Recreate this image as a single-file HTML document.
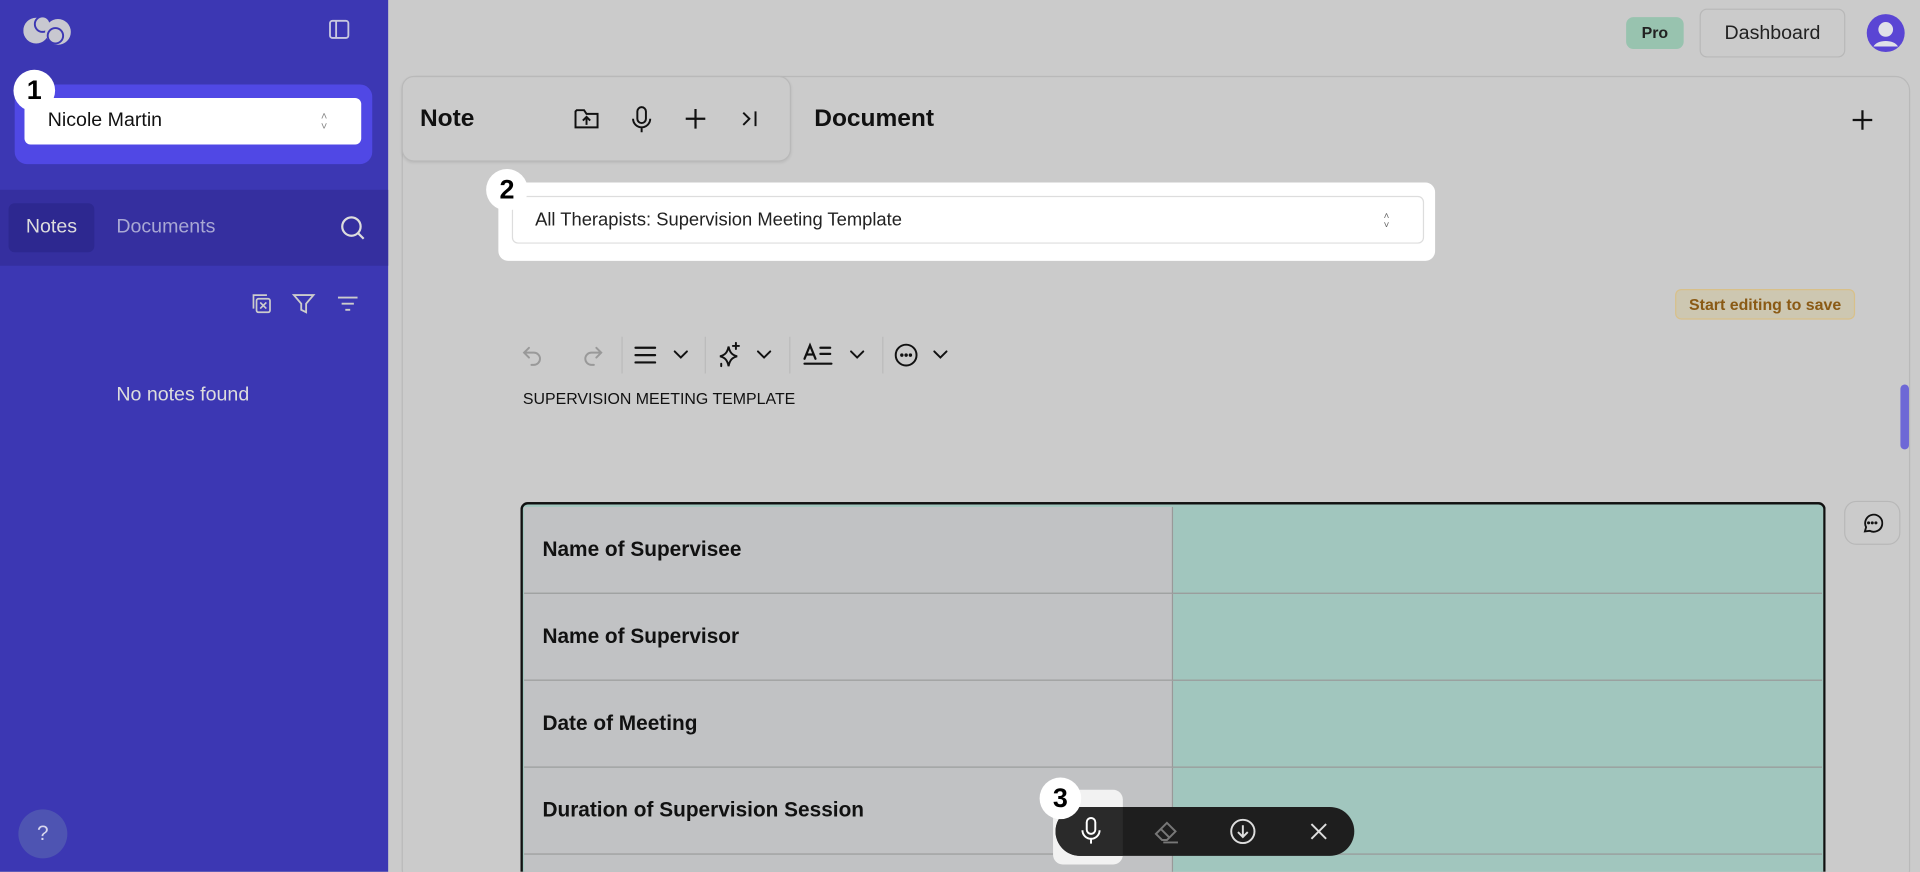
<!DOCTYPE html>
<html><head><meta charset="utf-8"><style>
*{box-sizing:border-box;margin:0;padding:0}
html,body{width:1920px;height:872px;overflow:hidden;background:#cbcbcb}
#w{width:1568px;height:712px;transform:scale(1.22449);transform-origin:0 0;position:relative;font-family:"Liberation Sans",sans-serif;color:#111;overflow:hidden}
.a{position:absolute}
svg{display:block}
.badge{position:absolute;width:34px;height:34px;border-radius:50%;background:#fff;font-weight:bold;font-size:22px;text-align:center;line-height:34px;color:#000}
td{padding:0}
</style></head><body><div id="w">
<div class="a" style="left:0;top:0;width:317px;height:712px;background:#3c37b3"></div>
<svg class="a" style="left:19px;top:11px" width="42" height="28" viewBox="0 0 40 26"><circle cx="10" cy="13" r="10" fill="#c8c8d0"/><circle cx="15" cy="8" r="6" fill="#c8c8d0" stroke="#3c37b3" stroke-width="1.5"/><circle cx="27" cy="14" r="10" fill="#c8c8d0"/><circle cx="25" cy="17" r="6" fill="#c8c8d0" stroke="#3c37b3" stroke-width="1.5"/></svg>
<svg class="a" style="left:268px;top:15px" width="18" height="18" viewBox="0 0 18 18" fill="none" stroke="#c8c8e0" stroke-width="1.5"><rect x="1.5" y="2" width="15" height="14" rx="2"/><line x1="6.5" y1="2" x2="6.5" y2="16"/></svg>
<div class="a" style="left:12px;top:69px;width:292px;height:65px;border-radius:10px;background:#5048e5"></div>
<div class="a" style="left:20px;top:80px;width:275px;height:38px;border-radius:5px;background:#fff;font-size:16px;line-height:38px;padding-left:19px;color:#111">Nicole Martin</div>
<div class="a" style="left:262px;top:91px;font-size:9px;color:#888;line-height:8px">˄<br>˅</div>
<div class="badge" style="left:11px;top:57px">1</div>
<div class="a" style="left:0;top:155px;width:317px;height:62px;background:#352f9f"></div>
<div class="a" style="left:7px;top:166px;width:70px;height:40px;border-radius:5px;background:#2d2890;color:#ddd;font-size:16px;line-height:40px;text-align:center">Notes</div>
<div class="a" style="left:95px;top:177px;color:#a9a8d4;font-size:16px">Documents</div>
<svg class="a" style="left:277px;top:175px" width="22" height="22" viewBox="0 0 22 22" fill="none" stroke="#ddd" stroke-width="1.8"><circle cx="10" cy="10" r="7.5"/><line x1="15.5" y1="15.5" x2="20" y2="20"/></svg>
<svg class="a" style="left:203px;top:238px" width="20" height="20" viewBox="0 0 20 20" fill="none" stroke="#ccc" stroke-width="1.4"><path d="M4 14V3h11"/><rect x="6.5" y="6" width="11" height="11" rx="1.5"/><path d="M9.5 9l5 5M14.5 9l-5 5"/></svg>
<svg class="a" style="left:238px;top:238px" width="20" height="20" viewBox="0 0 20 20" fill="none" stroke="#ccc" stroke-width="1.5"><path d="M2 3h16l-6 7v7l-4-2v-5z"/></svg>
<svg class="a" style="left:274px;top:238px" width="20" height="20" viewBox="0 0 20 20" fill="none" stroke="#ccc" stroke-width="1.5"><path d="M2 5h16M5 10h10M8 15h4"/></svg>
<div class="a" style="left:95px;top:314px;color:#ddd;font-size:16px">No notes found</div>
<div class="a" style="left:15px;top:661px;width:40px;height:40px;border-radius:50%;background:#4e54b2;font-size:17px;text-align:center;line-height:40px;color:#d8d8ee">?</div>

<div class="a" style="left:1328px;top:14px;width:47px;height:26px;border-radius:6px;background:#98c3af;font-size:13px;line-height:26px;text-align:center;color:#222;font-weight:bold">Pro</div>
<div class="a" style="left:1388px;top:7px;width:119px;height:40px;border-radius:6px;border:1px solid #b8b8b8;background:#cbcbcb;font-size:16px;line-height:40px;text-align:center;color:#222">Dashboard</div>
<svg class="a" style="left:1524px;top:11px" width="32" height="32" viewBox="0 0 32 32"><circle cx="16" cy="16" r="15.5" fill="#5a45d4"/><circle cx="16" cy="13" r="6" fill="#e0e0e8"/><path d="M6 27c3-6 17-6 20 0" fill="#e0e0e8"/></svg>

<div class="a" style="left:328px;top:62px;width:1232px;height:660px;border:1px solid #b9b9b9;border-radius:12px"></div>
<div class="a" style="left:328px;top:62px;width:318px;height:70px;border:1px solid #b9b9b9;border-radius:10px;background:#cbcbcb;box-shadow:0 1px 2px rgba(0,0,0,.08)"></div>
<div class="a" style="left:343px;top:86px;font-size:20px;font-weight:bold">Note</div>
<svg class="a" style="left:468px;top:86px" width="22" height="22" viewBox="0 0 22 22" fill="none" stroke="#111" stroke-width="1.6"><path d="M2 5v13h18V7h-9l-2-3H3z"/><path d="M11 16v-6M8 12.5l3-3 3 3"/></svg>
<svg class="a" style="left:514px;top:86px" width="20" height="24" viewBox="0 0 20 24" fill="none" stroke="#111" stroke-width="1.6"><rect x="6.5" y="1.5" width="7" height="13" rx="3.5"/><path d="M3 11a7 7 0 0 0 14 0M10 18v4"/></svg>
<svg class="a" style="left:559px;top:88px" width="18" height="18" viewBox="0 0 18 18" stroke="#111" stroke-width="1.8"><path d="M9 1v16M1 9h16"/></svg>
<svg class="a" style="left:604px;top:89px" width="16" height="16" viewBox="0 0 16 16" fill="none" stroke="#111" stroke-width="1.6"><path d="M3 3l5 5-5 5M13 2v12"/></svg>
<div class="a" style="left:665px;top:86px;font-size:20px;font-weight:bold">Document</div>
<svg class="a" style="left:1512px;top:89px" width="18" height="18" viewBox="0 0 18 18" stroke="#111" stroke-width="1.8"><path d="M9 1v16M1 9h16"/></svg>

<div class="a" style="left:407px;top:149px;width:765px;height:64px;border-radius:8px;background:#fff"></div>
<div class="a" style="left:418px;top:160px;width:745px;height:39px;border-radius:5px;border:1px solid #ddd;background:#fff;font-size:15px;line-height:38px;padding-left:18px;color:#222">All Therapists: Supervision Meeting Template</div>
<div class="a" style="left:1130px;top:173px;font-size:8px;color:#666;line-height:7px">˄<br>˅</div>
<div class="badge" style="left:397px;top:138px">2</div>

<div class="a" style="left:1368px;top:236px;width:147px;height:25px;border-radius:5px;border:1px solid #d8c08a;background:#cdc7b1;color:#8a5a15;font-size:13px;line-height:23px;text-align:center;font-weight:bold">Start editing to save</div>
<div class="a" style="left:1552px;top:314px;width:7px;height:53px;border-radius:4px;background:#6e68d6"></div>

<svg class="a" style="left:425px;top:275px" width="360" height="30" viewBox="0 0 360 30" fill="none" stroke-width="1.6" stroke-linecap="round">
<path d="M7 9l-4 4 4 4M3 13h8a5 5 0 0 1 0 10h-2" stroke="#999"/>
<path d="M62 9l4 4-4 4M66 13h-8a5 5 0 0 0 0 10h2" stroke="#999"/>
<line x1="83" y1="0" x2="83" y2="30" stroke="#bbb" stroke-width="1"/>
<path d="M94 9h16M94 15h16M94 21h16" stroke="#111" stroke-width="1.8"/>
<path d="M126 12l5 5 5-5" stroke="#111"/>
<line x1="151" y1="0" x2="151" y2="30" stroke="#bbb" stroke-width="1"/>
<path d="M170 8c1 5 3 7 7 8-4 1-6 3-7 8-1-5-3-7-7-8 4-1 6-3 7-8z" stroke="#111"/><path d="M176 5v5M173.5 7.5h5M164 22v2" stroke="#111"/>
<path d="M194 12l5 5 5-5" stroke="#111"/>
<line x1="220" y1="0" x2="220" y2="30" stroke="#bbb" stroke-width="1"/>
<path d="M232 18l4.5-11 4.5 11M233.5 14.5h6M245 9h8M245 14h8M232 22h22" stroke="#111" stroke-width="1.8"/>
<path d="M270 12l5 5 5-5" stroke="#111"/>
<line x1="296" y1="0" x2="296" y2="30" stroke="#bbb" stroke-width="1"/>
<circle cx="315" cy="15" r="8.5" stroke="#111"/><circle cx="311.5" cy="15" r=".6" fill="#111" stroke="#111"/><circle cx="315" cy="15" r=".6" fill="#111" stroke="#111"/><circle cx="318.5" cy="15" r=".6" fill="#111" stroke="#111"/>
<path d="M338 12l5 5 5-5" stroke="#111"/>
</svg>
<div class="a" style="left:427px;top:318px;font-size:13px;color:#111">SUPERVISION MEETING TEMPLATE</div>

<div class="a" style="left:425px;top:410px;width:1066px;height:302px;border:2px solid #111;border-bottom:none;border-radius:6px 6px 0 0;background:#a1c6be;overflow:hidden">
<table style="border-collapse:separate;border-spacing:0;margin:2px 0 0 1px;font-size:17px;font-weight:bold">
<tr><td style="width:530px;height:71px;background:#c1c2c4;padding-left:15px;border-right:1px solid #999;border-bottom:1px solid #999">Name of Supervisee</td><td style="width:530px;border-bottom:1px solid #999"></td></tr>
<tr><td style="height:71px;background:#c1c2c4;padding-left:15px;border-right:1px solid #999;border-bottom:1px solid #999">Name of Supervisor</td><td style="border-bottom:1px solid #999"></td></tr>
<tr><td style="height:71px;background:#c1c2c4;padding-left:15px;border-right:1px solid #999;border-bottom:1px solid #999">Date of Meeting</td><td style="border-bottom:1px solid #999"></td></tr>
<tr><td style="height:71px;background:#c1c2c4;padding-left:15px;border-right:1px solid #999;border-bottom:1px solid #999">Duration of Supervision Session</td><td style="border-bottom:1px solid #999"></td></tr>
<tr><td style="height:20px;background:#c1c2c4;border-right:1px solid #999"></td><td></td></tr>
</table></div>
<div class="a" style="left:1506px;top:409px;width:46px;height:36px;border-radius:10px;border:1px solid #b8b8b8"></div>
<svg class="a" style="left:1520px;top:418px" width="18" height="18" viewBox="0 0 18 18" fill="none" stroke="#111" stroke-width="1.5"><path d="M3 16l1-3.5A7 7 0 1 1 7 15.5z"/><circle cx="6" cy="9" r=".5" fill="#111"/><circle cx="9" cy="9" r=".5" fill="#111"/><circle cx="12" cy="9" r=".5" fill="#111"/></svg>

<div class="a" style="left:860px;top:645px;width:57px;height:61px;border-radius:8px;background:#f2f2f2"></div>
<div class="a" style="left:862px;top:659px;width:244px;height:40px;border-radius:20px;background:#1e1e1e"></div>
<div class="a" style="left:862px;top:659px;width:55px;height:40px;border-radius:20px 0 0 20px;background:#2a2a2a"></div>
<svg class="a" style="left:880px;top:666px" width="22" height="26" viewBox="0 0 22 26" fill="none" stroke="#fff" stroke-width="1.6"><rect x="7.5" y="2" width="7" height="13" rx="3.5"/><path d="M4 12a7 7 0 0 0 14 0M11 19v4"/></svg>
<svg class="a" style="left:941px;top:667px" width="24" height="24" viewBox="0 0 24 24" fill="none" stroke="#777" stroke-width="1.6"><path d="M3 14l9-9 7 7-7 7H8z"/><path d="M7 10l7 7M9 21h12"/></svg>
<svg class="a" style="left:1003px;top:667px" width="24" height="24" viewBox="0 0 24 24" fill="none" stroke="#ddd" stroke-width="1.6"><circle cx="12" cy="12" r="9.5"/><path d="M12 7v9M8 12.5l4 4 4-4"/></svg>
<svg class="a" style="left:1069px;top:671px" width="16" height="16" viewBox="0 0 16 16" stroke="#ddd" stroke-width="1.6"><path d="M2 2l12 12M14 2L2 14"/></svg>
<div class="badge" style="left:849px;top:635px">3</div>
</div></body></html>
